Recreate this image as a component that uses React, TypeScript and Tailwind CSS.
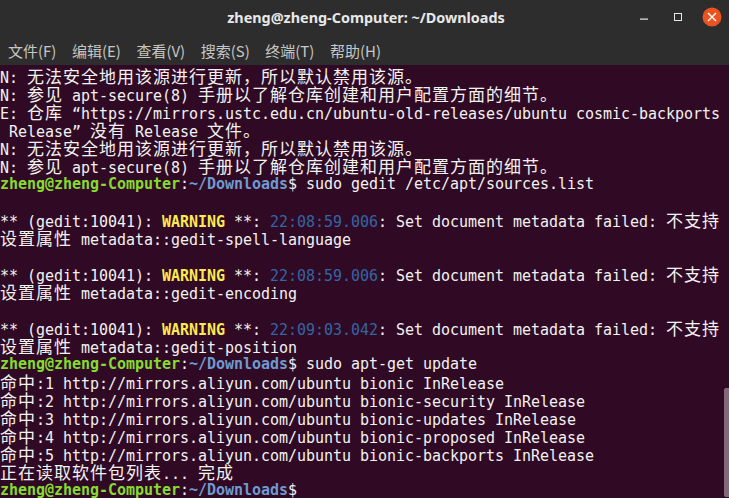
const mono = "font-['DejaVu_Sans_Mono','Liberation_Mono',monospace]";

// CJK glyphs take two terminal cells, everything else one
function Cells({ text }: { text: string }) {
  const parts = text.split(/([\u3000-\u303f\u4e00-\u9fff\uff00-\uffef]+)/g);
  return (
    <>
      {parts.map((part, i) =>
        i % 2 === 1 ? (
          <span key={i} className="font-['Noto_Sans_CJK_SC',sans-serif] text-[17px] tracking-[1px] leading-none">
            {part}
          </span>
        ) : (
          <span key={i}>{part}</span>
        )
      )}
    </>
  );
}

function Line({ children }: { children?: React.ReactNode }) {
  return <div className="h-[18px] leading-[18px] whitespace-pre">{children}</div>;
}

function Prompt({ cmd }: { cmd?: string }) {
  return (
    <Line>
      <span className="font-bold text-[#85db30]">zheng@zheng-Computer</span>
      <span>:</span>
      <span className="font-bold text-[#6f9bd0]">~/Downloads</span>
      <span>$ {cmd}</span>
    </Line>
  );
}

function Warning({ time, text }: { time: string; text: string }) {
  return (
    <>
      <Line />
      <Line>
        <span>** (gedit:10041): </span>
        <span className="font-bold text-[#fce94f]">WARNING</span>
        <span> **: </span>
        <span className="text-[#3465a4]">{time}</span>
        <Cells text=": Set document metadata failed: 不支持" />
      </Line>
      <Line>
        <Cells text={text} />
      </Line>
    </>
  );
}

const before = [
  'N: 无法安全地用该源进行更新，所以默认禁用该源。',
  'N: 参见 apt-secure(8) 手册以了解仓库创建和用户配置方面的细节。',
  'E: 仓库 “https://mirrors.ustc.edu.cn/ubuntu-old-releases/ubuntu cosmic-backports',
  ' Release” 没有 Release 文件。',
  'N: 无法安全地用该源进行更新，所以默认禁用该源。',
  'N: 参见 apt-secure(8) 手册以了解仓库创建和用户配置方面的细节。',
];

const hits = [
  '命中:1 http://mirrors.aliyun.com/ubuntu bionic InRelease',
  '命中:2 http://mirrors.aliyun.com/ubuntu bionic-security InRelease',
  '命中:3 http://mirrors.aliyun.com/ubuntu bionic-updates InRelease',
  '命中:4 http://mirrors.aliyun.com/ubuntu bionic-proposed InRelease',
  '命中:5 http://mirrors.aliyun.com/ubuntu bionic-backports InRelease',
  '正在读取软件包列表... 完成',
];

const menus = ['文件(F)', '编辑(E)', '查看(V)', '搜索(S)', '终端(T)', '帮助(H)'];

export default function App() {
  return (
    <div className="w-[729px] h-[498px] overflow-hidden flex flex-col bg-[#300a24]">
      <div className="h-[65px] shrink-0 bg-[#2d2d2d] flex flex-col">
        <div className="h-[35px] flex items-center relative">
          <div className="w-full pl-[3px] text-center text-[14.4px] font-bold text-[#e8e8e8] font-['Noto_Sans',sans-serif]">
            zheng@zheng-Computer: ~/Downloads
          </div>
          <svg className="absolute right-0 top-0" width="100" height="35" viewBox="0 0 100 35">
            <rect x="11" y="18.5" width="8" height="1.2" fill="#e8e8e8" />
            <rect x="45.5" y="13.5" width="7" height="7" fill="none" stroke="#e8e8e8" strokeWidth="1" />
            <circle cx="83" cy="17" r="9.5" fill="#e95420" />
            <path d="M79 13 L87 21 M87 13 L79 21" stroke="#fff" strokeWidth="1.4" />
          </svg>
        </div>
        <div className="flex gap-[15.5px] pl-[8px] pt-[6px] text-[15px] leading-[20px] text-[#c6c6c4]">
          {menus.map((m) => (
            <span key={m} className="font-['Noto_Sans_CJK_SC',sans-serif]">{m}</span>
          ))}
        </div>
      </div>

      <div className={`relative flex-1 pt-[2px] text-[15px] tracking-[-0.03px] text-[#f2f2f0] ${mono}`}>
        {before.map((t, i) => (
          <Line key={i}>
            <Cells text={t} />
          </Line>
        ))}
        <Prompt cmd="sudo gedit /etc/apt/sources.list" />
        <Warning time="22:08:59.006" text="设置属性 metadata::gedit-spell-language" />
        <Warning time="22:08:59.006" text="设置属性 metadata::gedit-encoding" />
        <Warning time="22:09:03.042" text="设置属性 metadata::gedit-position" />
        <Prompt cmd="sudo apt-get update" />
        {hits.map((t, i) => (
          <Line key={i}>
            <Cells text={t} />
          </Line>
        ))}
        <Prompt />
        <div className="absolute right-0 top-[323px] w-[5px] h-[109px] rounded-l-[2px] bg-[#82697a]" />
      </div>
    </div>
  );
}
